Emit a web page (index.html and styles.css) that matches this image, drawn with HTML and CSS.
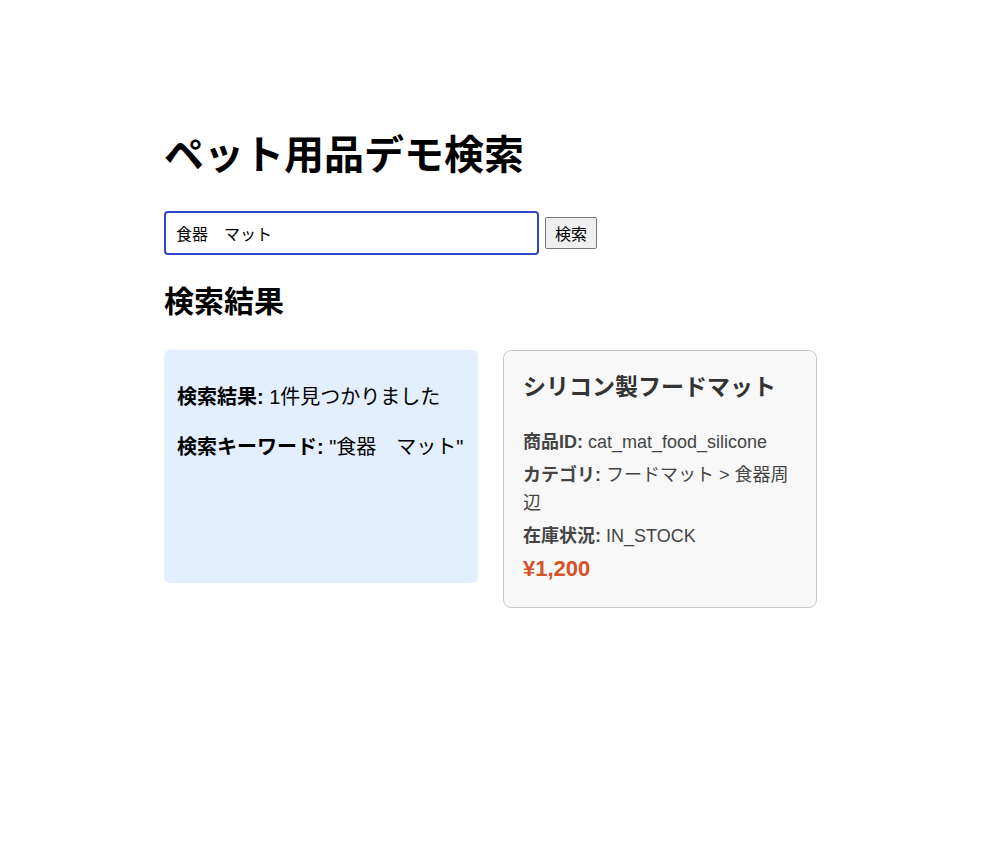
FILE: index.html
```html
<!DOCTYPE html>
<html lang="ja">
<head>
  <meta charset="UTF-8" />
  <title>ペット用品デモ検索</title>
  <link rel="stylesheet" href="styles.css">
</head>
<body>
  <div class="container">
    <h1>ペット用品デモ検索</h1>

    <form class="search-form">
      <input type="text" class="search-input" value="食器　マット">
      <button type="button" class="search-button">検索</button>
    </form>

    <h2>検索結果</h2>

    <div class="results">
      <div class="summary">
        <p><strong>検索結果:</strong> 1件見つかりました</p>
        <p><strong>検索キーワード:</strong> "食器　マット"</p>
      </div>

      <div class="product">
        <h3>シリコン製フードマット</h3>
        <p><strong>商品ID:</strong> cat_mat_food_silicone</p>
        <p><strong>カテゴリ:</strong> フードマット &gt; 食器周辺</p>
        <p><strong>在庫状況:</strong> IN_STOCK</p>
        <p class="price">¥1,200</p>
      </div>
    </div>
  </div>
</body>
</html>
```

FILE: styles.css
```css
body {
  font-family: "Liberation Sans", "Noto Sans CJK JP", sans-serif;
  margin: 0;
  background: #fff;
  color: #000;
}
.container {
  width: 672px;
  margin: 0 auto;
  padding-top: 131px;
}
h1 {
  font-size: 40px;
  line-height: 48px;
  margin: 0 0 32px;
}
.search-form {
  display: flex;
  align-items: center;
  gap: 6px;
}
.search-input {
  width: 375px;
  height: 44px;
  box-sizing: border-box;
  padding: 0 10px;
  border: 2px solid #3245c6;
  border-radius: 4px;
  font-family: inherit;
  font-size: 16px;
  outline: none;
}
.search-button {
  height: 32px;
  padding: 0 9px;
  font-family: inherit;
  font-size: 16px;
  background: #efefef;
  border: 1px solid #767676;
  border-radius: 2px;
  color: #000;
}
h2 {
  font-size: 30px;
  line-height: 36px;
  margin: 29px 0 30px;
}
.results {
  display: grid;
  grid-template-columns: repeat(2, 314px);
  gap: 25px;
  align-items: start;
}
.summary {
  background: #e3eefe;
  border-radius: 6px;
  padding: 12px 13px;
  min-height: 233px;
  box-sizing: border-box;
  font-size: 20px;
  line-height: 30px;
}
.summary p {
  margin: 20px 0;
}
.product {
  background: #f8f8f8;
  border: 1px solid #c8c8c8;
  border-radius: 8px;
  padding: 20px 19px 20px 19px;
  color: #444;
  font-size: 18px;
  line-height: 28px;
}
.product h3 {
  color: #333;
  font-size: 23px;
  line-height: 32px;
  margin: 0 0 25px;
}
.product p {
  margin: 0 0 5px;
}
.product .price {
  color: #d4512a;
  font-weight: bold;
  font-size: 22px;
  margin: 4px 0 4px;
}
```
